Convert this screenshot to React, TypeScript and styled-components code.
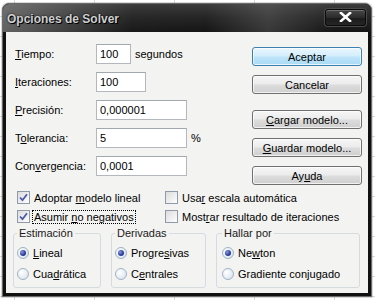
import React from "react";
import styled, { createGlobalStyle, css } from "styled-components";

const Global = createGlobalStyle`
  html, body { margin: 0; padding: 0; }
  body {
    width: 375px;
    height: 300px;
    overflow: hidden;
    font-family: "Liberation Sans", Arial, sans-serif;
    font-size: 11px;
    background-color: #ffffff;
    background-image:
      repeating-linear-gradient(90deg, transparent 0 14px, #d8dadc 14px 15px, transparent 15px 80px),
      repeating-linear-gradient(180deg, transparent 0 16px, #d8dadc 16px 17px, transparent 17px 20px);
  }
`;

const Window = styled.div`
  box-sizing: border-box;
  margin: 3px 0 0 2px;
  width: 370px;
  height: 294px;
  display: flex;
  flex-direction: column;
  background: #111;
  border: 1px solid #6a6a6a;
  border-radius: 7px 7px 0 0;
  padding: 0 3px 3px 3px;
  box-shadow: 0 0 0 1px rgba(0,0,0,0.15);
`;

const TitleBar = styled.div`
  height: 26px;
  flex: none;
  display: flex;
  align-items: center;
  justify-content: space-between;
  margin: 0 -3px;
  padding: 0 5px 2px 4px;
  border-radius: 6px 6px 0 0;
  background:
    linear-gradient(90deg, rgba(150,150,150,0.6) 0%, rgba(60,60,60,0.1) 35%, rgba(0,0,0,0) 55%, rgba(120,120,120,0.35) 72%, rgba(0,0,0,0) 90%),
    linear-gradient(180deg, #3c3c3c 0%, #262626 45%, #151515 100%);
`;

const Title = styled.span`
  font-family: "Liberation Sans", Arial, sans-serif;
  font-weight: bold;
  font-size: 12px;
  color: #cfcfcf;
  text-shadow: 0 0 2px #000, 1px 1px 0 #000;
  padding-top: 4px;
`;

const CloseButton = styled.div`
  box-sizing: border-box;
  width: 41px;
  height: 17px;
  border-radius: 3px;
  border: 1px solid #0a0a0a;
  box-shadow: inset 0 1px 0 #6e6e6e, 0 0 0 1px #4a4a4a;
  background: linear-gradient(180deg, #474747 0%, #2b2b2b 50%, #1a1a1a 51%, #262626 100%);
  display: flex;
  align-items: center;
  justify-content: center;
`;

const Content = styled.div`
  flex: 1;
  background: #f3f3f1;
  display: flex;
  flex-direction: column;
  padding: 12px 6px 0 7px;
  color: #000;
`;

const Top = styled.div`
  display: flex;
  justify-content: space-between;
  align-items: flex-start;
`;

const Form = styled.div`
  display: flex;
  flex-direction: column;
  gap: 8px;
  margin-left: 2px;
`;

const FieldRow = styled.div`
  display: flex;
  align-items: center;
  height: 20px;
`;

const Label = styled.span`
  width: 81px;
  flex: none;
`;

const Input = styled.div<{ $w: number }>`
  box-sizing: border-box;
  width: ${(p) => p.$w}px;
  height: 20px;
  background: #fff;
  border: 1px solid #b4b8bd;
  border-top-color: #a3a8ae;
  padding-left: 3px;
  display: flex;
  align-items: center;
`;

const Suffix = styled.span`
  margin-left: 4px;
`;

const ButtonCol = styled.div`
  display: flex;
  flex-direction: column;
  margin-top: 3px;
`;

const Button = styled.div<{ $primary?: boolean; $gap: number }>`
  box-sizing: border-box;
  width: 110px;
  height: 19px;
  margin-top: ${(p) => p.$gap}px;
  border: 1px solid #707070;
  border-radius: 3px;
  display: flex;
  align-items: center;
  justify-content: center;
  box-shadow: inset 0 0 0 1px rgba(255,255,255,0.7);
  background: linear-gradient(180deg, #f6f6f6 0%, #ececec 45%, #dcdcdc 55%, #cfcfcf 100%);
  ${(p) =>
    p.$primary &&
    css`
      border-color: #3c7fb1;
      background: linear-gradient(180deg, #eaf6fd 0%, #d5eefc 45%, #bde4fa 55%, #a9daf5 100%);
    `}
`;

const Checks = styled.div`
  display: grid;
  grid-template-columns: 148px auto;
  grid-auto-rows: 19px;
  margin: 3px 0 0 4px;
`;

const CheckItem = styled.div`
  display: flex;
  align-items: center;
  gap: 4px;
`;

const Box = styled.span`
  box-sizing: border-box;
  width: 13px;
  height: 13px;
  flex: none;
  border: 1px solid #8f9aa8;
  background: linear-gradient(135deg, #dcdcdc 0%, #f0f0f0 60%, #ffffff 100%);
  display: flex;
  align-items: center;
  justify-content: center;
`;

const Focus = styled.span`
  outline: 1px dotted #000;
  outline-offset: 0;
  padding: 0 1px;
  margin-left: -1px;
`;

const Groups = styled.div`
  display: flex;
  gap: 10px;
  margin-top: 1px;
`;

const Group = styled.fieldset<{ $w: number; $inset: number }>`
  box-sizing: border-box;
  width: ${(p) => p.$w}px;
  margin: 0;
  min-width: 0;
  border: 1px solid #d6dbe0;
  border-radius: 3px;
  padding: 2px 2px 3px ${(p) => p.$inset}px;
`;

const Legend = styled.legend`
  padding: 0 2px;
  line-height: 13px;
  color: #1a1a1a;
`;

const RadioRow = styled.div`
  display: flex;
  align-items: center;
  gap: 4px;
  height: 21px;
`;

const Radio = styled.span<{ $on?: boolean }>`
  box-sizing: border-box;
  width: 12px;
  height: 12px;
  flex: none;
  border-radius: 50%;
  border: 1px solid #9fb2c6;
  background: radial-gradient(circle at 35% 35%, #ffffff 0%, #e6ecf2 60%, #cdd7e2 100%);
  display: flex;
  align-items: center;
  justify-content: center;
  &::after {
    content: "";
    display: ${(p) => (p.$on ? "block" : "none")};
    width: 6px;
    height: 6px;
    border-radius: 50%;
    background: radial-gradient(circle at 35% 35%, #8a9be0 0%, #2e3f9e 55%, #1b2670 100%);
  }
`;

const U = styled.span`
  text-decoration: underline;
  text-underline-offset: 1px;
`;

const Check = () => (
  <svg width="9" height="9" viewBox="0 0 9 9">
    <path d="M1 4.5 L3.5 7.2 L8 1.2" fill="none" stroke="#4a5aa8" strokeWidth="1.8" />
  </svg>
);

export default function App() {
  return (
    <>
      <Global />
      <Window>
        <TitleBar>
          <Title>Opciones de Solver</Title>
          <CloseButton>
            <svg width="13" height="10" viewBox="0 0 13 10">
              <path d="M2 1 L11 9 M11 1 L2 9" stroke="#fff" strokeWidth="2.6" strokeLinecap="square" />
            </svg>
          </CloseButton>
        </TitleBar>
        <Content>
          <Top>
            <Form>
              <FieldRow>
                <Label><U>T</U>iempo:</Label>
                <Input $w={35}>100</Input>
                <Suffix>segundos</Suffix>
              </FieldRow>
              <FieldRow>
                <Label><U>I</U>teraciones:</Label>
                <Input $w={50}>100</Input>
              </FieldRow>
              <FieldRow>
                <Label><U>P</U>recisión:</Label>
                <Input $w={91}>0,000001</Input>
              </FieldRow>
              <FieldRow>
                <Label>T<U>o</U>lerancia:</Label>
                <Input $w={91}>5</Input>
                <Suffix>%</Suffix>
              </FieldRow>
              <FieldRow>
                <Label>Con<U>v</U>ergencia:</Label>
                <Input $w={91}>0,0001</Input>
              </FieldRow>
            </Form>
            <ButtonCol>
              <Button $primary $gap={0}>Aceptar</Button>
              <Button $gap={9}>Cancelar</Button>
              <Button $gap={16}><U>C</U>argar modelo...</Button>
              <Button $gap={9}><U>G</U>uardar modelo...</Button>
              <Button $gap={9}>Ay<U>u</U>da</Button>
            </ButtonCol>
          </Top>
          <Checks>
            <CheckItem>
              <Box><Check /></Box>
              <span>Adoptar <U>m</U>odelo lineal</span>
            </CheckItem>
            <CheckItem>
              <Box />
              <span>Usa<U>r</U> escala automática</span>
            </CheckItem>
            <CheckItem>
              <Box><Check /></Box>
              <Focus>Asumir <U>n</U>o negativos</Focus>
            </CheckItem>
            <CheckItem>
              <Box />
              <span>Most<U>r</U>ar resultado de iteraciones</span>
            </CheckItem>
          </Checks>
          <Groups>
            <Group $w={88} $inset={3}>
              <Legend>Estimación</Legend>
              <RadioRow><Radio $on /><span><U>L</U>ineal</span></RadioRow>
              <RadioRow><Radio /><span>Cua<U>d</U>rática</span></RadioRow>
            </Group>
            <Group $w={95} $inset={3}>
              <Legend>Derivadas</Legend>
              <RadioRow><Radio $on /><span>Progre<U>s</U>ivas</span></RadioRow>
              <RadioRow><Radio /><span>C<U>e</U>ntrales</span></RadioRow>
            </Group>
            <Group $w={144} $inset={5}>
              <Legend>Hallar por</Legend>
              <RadioRow><Radio $on /><span>Ne<U>w</U>ton</span></RadioRow>
              <RadioRow><Radio /><span>Gradiente con<U>j</U>ugado</span></RadioRow>
            </Group>
          </Groups>
        </Content>
      </Window>
    </>
  );
}
